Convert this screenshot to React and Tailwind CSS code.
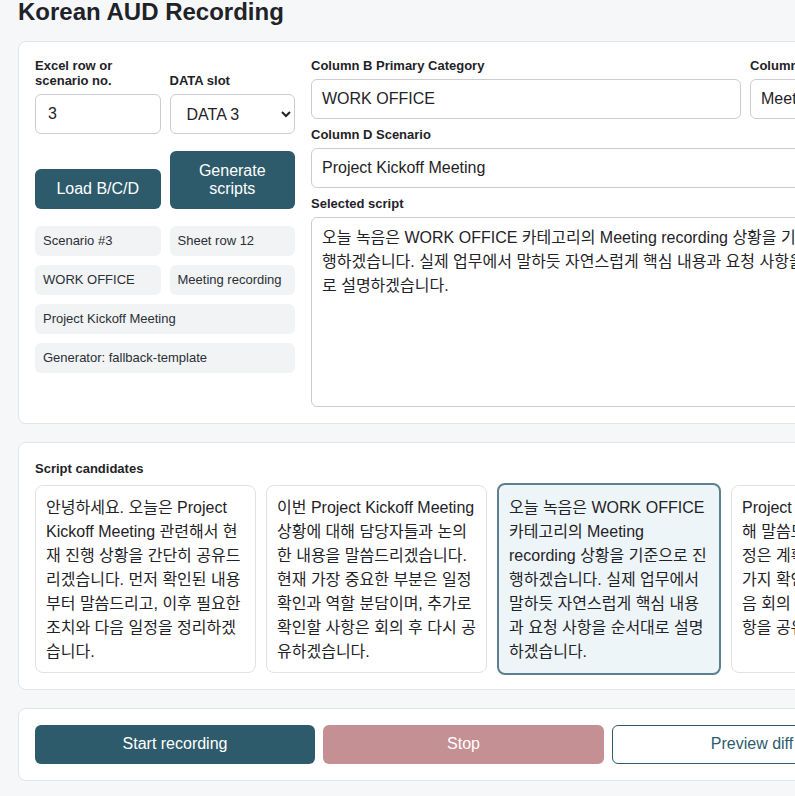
export default function App() {
  const cards = [
    "안녕하세요. 오늘은 Project Kickoff Meeting 관련해서 현재 진행 상황을 간단히 공유드리겠습니다. 먼저 확인된 내용부터 말씀드리고, 이후 필요한 조치와 다음 일정을 정리하겠습니다.",
    "이번 Project Kickoff Meeting 상황에 대해 담당자들과 논의한 내용을 말씀드리겠습니다. 현재 가장 중요한 부분은 일정 확인과 역할 분담이며, 추가로 확인할 사항은 회의 후 다시 공유하겠습니다.",
    "오늘 녹음은 WORK OFFICE 카테고리의 Meeting recording 상황을 기준으로 진행하겠습니다. 실제 업무에서 말하듯 자연스럽게 핵심 내용과 요청 사항을 순서대로 설명하겠습니다.",
    "Project Kickoff Meeting에 대해 말씀드리면, 전반적으로 일정은 계획대로 진행 중이고 몇 가지 확인이 필요한 자료를 다음 회의 전까지 정리해 결정 사항을 공유드리겠습니다.",
  ];
  const font = { fontFamily: '"Liberation Sans", Arial, "Noto Sans CJK KR", sans-serif' };
  return (
    <div className="w-[795px] h-[796px] overflow-hidden bg-[#f6f7f9] text-[#1f2328]" style={font}>
      <div className="w-[1100px] pl-[18px]">
        <h1 className="text-[24px] font-bold leading-[24px] h-[41px]">Korean AUD Recording</h1>
        <div className="bg-white border border-[#e1e4e8] rounded-lg p-4 flex gap-4">
          <div className="w-[260px] shrink-0">
            <div className="grid grid-cols-2 gap-x-[9px] gap-y-[17px] items-end">
              <label className="text-[13px] font-bold leading-[15px]">Excel row or scenario no.
                <input defaultValue="3" className="mt-[6px] block w-full h-[40px] border border-[#c9cdd2] rounded-md px-3 text-[16px] font-normal" />
              </label>
              <label className="text-[13px] font-bold leading-[15px]">DATA slot
                <select defaultValue="3" className="mt-[6px] block w-full h-[40px] border border-[#c9cdd2] rounded-md px-3 text-[16px] font-normal bg-white">
                  <option value="3">DATA 3</option>
                </select>
              </label>
              <div className="h-[40px] rounded-md bg-[#2e5b6b] text-white text-[16px] flex items-center justify-center">Load B/C/D</div>
              <div className="h-[58px] rounded-md bg-[#2e5b6b] text-white text-[16px] leading-[18px] flex items-center justify-center text-center">Generate<br />scripts</div>
            </div>
            <div className="grid grid-cols-2 gap-[9px] mt-[17px] text-[13px] text-[#2b3036]">
              <div className="h-[30px] rounded-md bg-[#f1f3f5] px-2 flex items-center">Scenario #3</div>
              <div className="h-[30px] rounded-md bg-[#f1f3f5] px-2 flex items-center">Sheet row 12</div>
              <div className="h-[30px] rounded-md bg-[#f1f3f5] px-2 flex items-center">WORK OFFICE</div>
              <div className="h-[30px] rounded-md bg-[#f1f3f5] px-2 flex items-center">Meeting recording</div>
              <div className="col-span-2 h-[30px] rounded-md bg-[#f1f3f5] px-2 flex items-center">Project Kickoff Meeting</div>
              <div className="col-span-2 h-[30px] rounded-md bg-[#f1f3f5] px-2 flex items-center">Generator: fallback-template</div>
            </div>
          </div>
          <div className="flex-1 flex flex-col gap-[8px]">
            <div className="flex gap-[9px]">
              <div className="w-[430px]">
                <div className="text-[13px] font-bold leading-[15px] mb-[6px]">Column B Primary Category</div>
                <div className="h-[40px] border border-[#c9cdd2] rounded-md px-[10px] flex items-center text-[16px]">WORK OFFICE</div>
              </div>
              <div className="flex-1">
                <div className="text-[13px] font-bold leading-[15px] mb-[6px]">Column C Secondary Category</div>
                <div className="h-[40px] border border-[#c9cdd2] rounded-md px-[10px] flex items-center text-[16px]">Meeting recording</div>
              </div>
            </div>
            <div>
              <div className="text-[13px] font-bold leading-[15px] mb-[6px]">Column D Scenario</div>
              <div className="h-[40px] border border-[#c9cdd2] rounded-md px-[10px] flex items-center text-[16px]">Project Kickoff Meeting</div>
            </div>
            <div>
              <div className="text-[13px] font-bold leading-[15px] mb-[6px]">Selected script</div>
              <div className="h-[190px] border border-[#c9cdd2] rounded-md px-[10px] py-[8px] text-[16px] leading-[24px] w-[560px]">오늘 녹음은 WORK OFFICE 카테고리의 Meeting recording 상황을 기준으로 진행하겠습니다. 실제 업무에서 말하듯 자연스럽게 핵심 내용과 요청 사항을 순서대로 설명하겠습니다.</div>
            </div>
          </div>
        </div>
        <div className="mt-[18px] bg-white border border-[#e1e4e8] rounded-lg p-4">
          <div className="text-[13px] font-bold mb-[6px]">Script candidates</div>
          <div className="flex gap-[10px]">
            {cards.map((t, i) => (
              <div key={i} className={i === 2
                ? "w-[224px] h-[192px] -my-[2px] shrink-0 rounded-lg border-2 border-[#5d8090] bg-[#eef5f8] px-[10px] py-[11px] text-[16px] leading-[24px]"
                : "w-[221px] h-[188px] shrink-0 rounded-lg border border-[#dfe2e6] bg-white px-[10px] py-[10px] text-[16px] leading-[24px]"}>{t}</div>
            ))}
          </div>
        </div>
        <div className="mt-[18px] bg-white border border-[#e1e4e8] rounded-lg p-4 flex gap-[8px]">
          <div className="w-[280px] h-[39px] rounded-md bg-[#2e5b6b] text-white text-[16px] flex items-center justify-center">Start recording</div>
          <div className="w-[281px] h-[39px] rounded-md bg-[#c49093] text-white text-[16px] flex items-center justify-center">Stop</div>
          <div className="w-[280px] h-[39px] rounded-md border border-[#2e5b6b] text-[#2e5b6b] text-[16px] flex items-center justify-center">Preview diff</div>
        </div>
      </div>
    </div>
  );
}
